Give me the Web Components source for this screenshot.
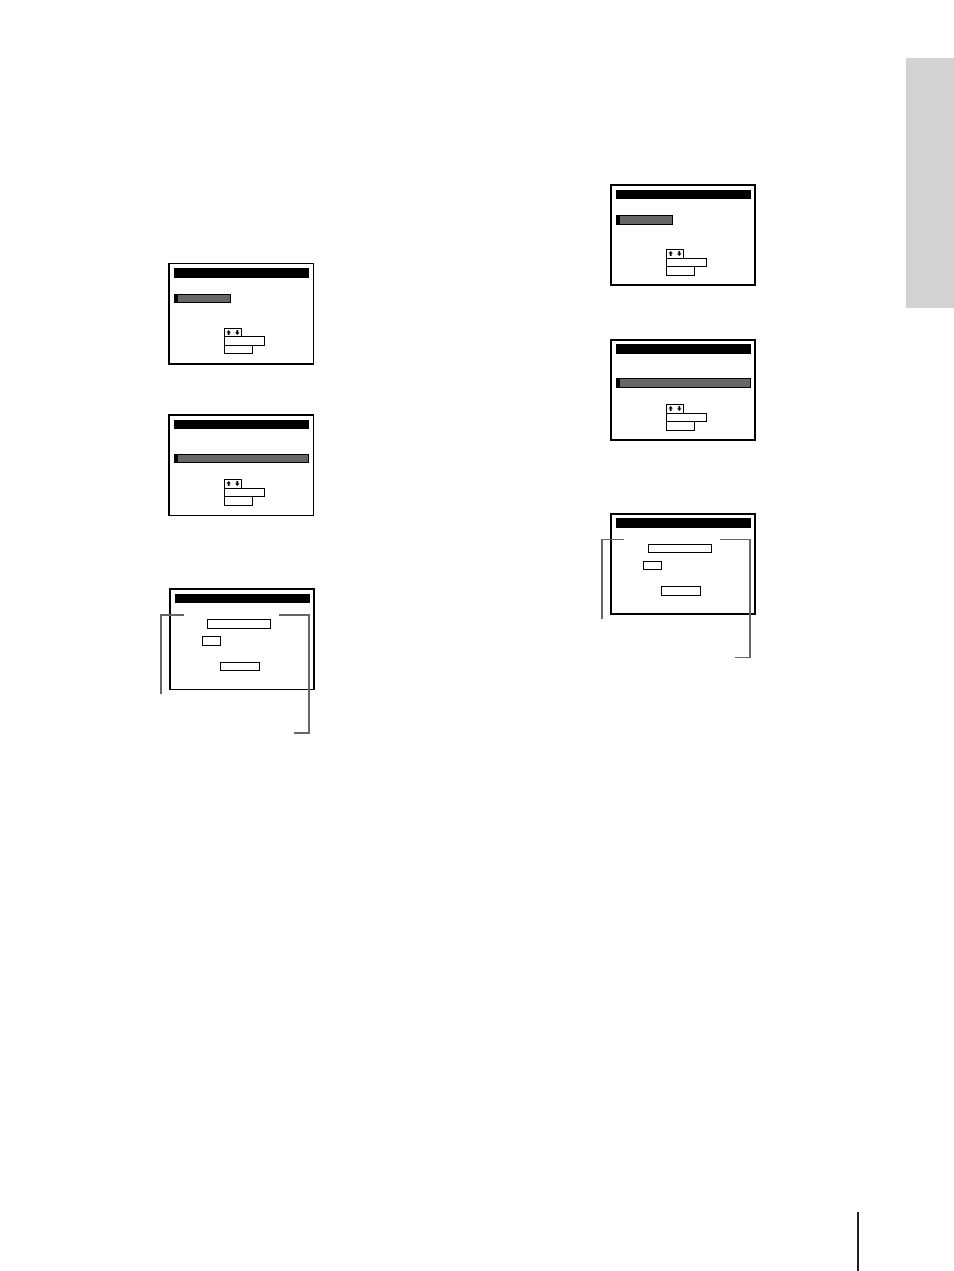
<!DOCTYPE html>
<html lang="en">
<head>
<meta charset="utf-8">
<title>Manual page</title>
<style>
  body { margin: 0; background: #fff; font-family: "Liberation Sans", sans-serif; }
</style>
</head>
<body>
<manual-page>
  <figure-column slot="figures" style="--top: 263px; --inset: 8px; --gap: 49px">
    <osd-screen style="--edges: 1px 1px 2px 2px; --pad: 4px; --title: 10px">
      <osd-highlight style="--before: 16px; --w: 57px; --h: 9px"></osd-highlight>
      <osd-keys style="--before: 25px; --outer: 9px; --middle: 10px"></osd-keys>
    </osd-screen>
    <osd-screen style="--edges: 2px 1px 1px 2px">
      <osd-highlight style="--before: 25px; --h: 9px"></osd-highlight>
      <osd-keys style="--before: 16px"></osd-keys>
    </osd-screen>
    <callout-figure slot="result" style="--arm: 24px; --line: 2px; --drop: 120px">
      <osd-screen style="--edges: 2px 2px 1px 2px">
        <osd-field style="--before: 16px; --indent: 32px; --w: 64px; --h: 10px"></osd-field>
        <osd-field style="--before: 7px; --indent: 27px; --w: 19px; --h: 10px"></osd-field>
        <osd-field style="--before: 16px; --indent: 45px; --w: 40px; --h: 9px"></osd-field>
      </osd-screen>
    </callout-figure>
  </figure-column>
  <figure-column slot="figures" style="--top: 184px; --inset: 9px; --gap: 53px">
    <osd-screen>
      <osd-highlight style="--before: 16px; --w: 57px"></osd-highlight>
      <osd-keys style="--before: 24px"></osd-keys>
    </osd-screen>
    <osd-screen style="--pad: 3px; --title: 10px">
      <osd-highlight style="--before: 24px"></osd-highlight>
      <osd-keys style="--before: 16px"></osd-keys>
    </osd-screen>
    <callout-figure slot="result" style="--arm: 23px; --line: 1px; --drop: 119px">
      <osd-screen style="--pad: 3px; --title: 10px">
        <osd-field style="--before: 16px; --indent: 32px; --w: 64px; --h: 9px"></osd-field>
        <osd-field style="--before: 8px; --indent: 27px; --w: 19px; --h: 9px"></osd-field>
        <osd-field style="--before: 16px; --indent: 45px; --w: 40px; --h: 10px"></osd-field>
      </osd-screen>
    </callout-figure>
  </figure-column>
</manual-page>

<script>
const define = (name, html) => {
  const template = document.createElement("template");
  template.innerHTML = html;
  customElements.define(name, class extends HTMLElement {
    constructor() {
      super();
      this.attachShadow({ mode: "open" }).append(template.content.cloneNode(true));
    }
  });
};

// Page: two columns of figures, a section tab at the edge, a rule at the foot.
define("manual-page", `
  <style>
    :host { display: flex; flex-direction: column; min-height: 100vh; }
    .body { display: flex; flex: 1; align-items: flex-start; }
    main { display: flex; flex: 1; justify-content: space-between; padding: 0 150px 0 160px; }
    aside { width: 48px; height: 250px; margin-top: 58px; background: #d2d2d2; }
    footer { display: flex; justify-content: flex-end; padding-right: 95px; }
    .rule { width: 2px; height: 59px; background: #231f20; }
  </style>
  <div class="body">
    <main><slot name="figures"></slot></main>
    <aside></aside>
  </div>
  <footer><div class="rule"></div></footer>`);

define("figure-column", `
  <style>
    :host { display: block; width: 155px; padding-top: var(--top); }
    .steps { display: flex; flex-direction: column; gap: var(--gap); padding-left: var(--inset); }
    .result { margin-top: 72px; }
  </style>
  <div class="steps"><slot></slot></div>
  <div class="result"><slot name="result"></slot></div>`);

define("osd-screen", `
  <style>
    :host {
      display: block; box-sizing: border-box; width: 146px; height: 102px;
      border: solid #000; border-width: var(--edges, 2px);
      padding: var(--pad, 4px) 0 0 4px;
    }
    .title { width: 135px; height: var(--title, 9px); background: #000; }
  </style>
  <div class="title"></div>
  <slot></slot>`);

define("osd-highlight", `
  <style>
    :host {
      display: block; box-sizing: border-box; margin-top: var(--before);
      width: var(--w, 135px); height: var(--h, 10px);
      background: #666; border: 1px solid #000; border-left-width: 4px;
    }
  </style>`);

define("osd-field", `
  <style>
    :host {
      display: block; box-sizing: border-box; width: var(--w); height: var(--h);
      margin: var(--before) 0 0 var(--indent); border: 1px solid #000;
    }
  </style>`);

// Key guide: the arrow keys above two blank key names with shared borders.
define("osd-keys", `
  <style>
    :host { display: block; margin: var(--before) 0 0 50px; }
    div { box-sizing: border-box; border: 1px solid #000; height: var(--outer, 10px); }
    div + div { margin-top: -1px; }
    .arrows { width: 18px; }
    .middle { width: 41px; height: var(--middle, 9px); }
    .last { width: 29px; }
    svg { display: block; }
  </style>
  <div class="arrows">
    <svg width="16" height="7" viewBox="0 0 16 7" aria-hidden="true">
      <path d="M3.6 1 L6 3.5 H4.6 V6 H2.8 V3.5 H1.4Z M11.4 1 H13.2 V3.5 H14.6 L12.3 6 L10 3.5 H11.4Z"/>
    </svg>
  </div>
  <div class="middle"></div>
  <div class="last"></div>`);

// Two leader lines drawn over the screen and running below it.
define("callout-figure", `
  <style>
    :host { display: block; position: relative; padding: 0 0 44px 9px; }
    .lead { position: absolute; top: 26px; box-sizing: border-box; border: 0 solid #666; }
    .left { left: 0; width: var(--arm); height: 80px; border-width: var(--line) 0 0 2px; }
    .right { left: 119px; width: 31px; height: var(--drop); border-width: var(--line) 2px 0 0; }
    .foot { position: absolute; right: 0; bottom: 0; width: 14px; height: var(--line); background: #666; }
  </style>
  <slot></slot>
  <div class="lead left"></div>
  <div class="lead right"><div class="foot"></div></div>`);
</script>
</body>
</html>
